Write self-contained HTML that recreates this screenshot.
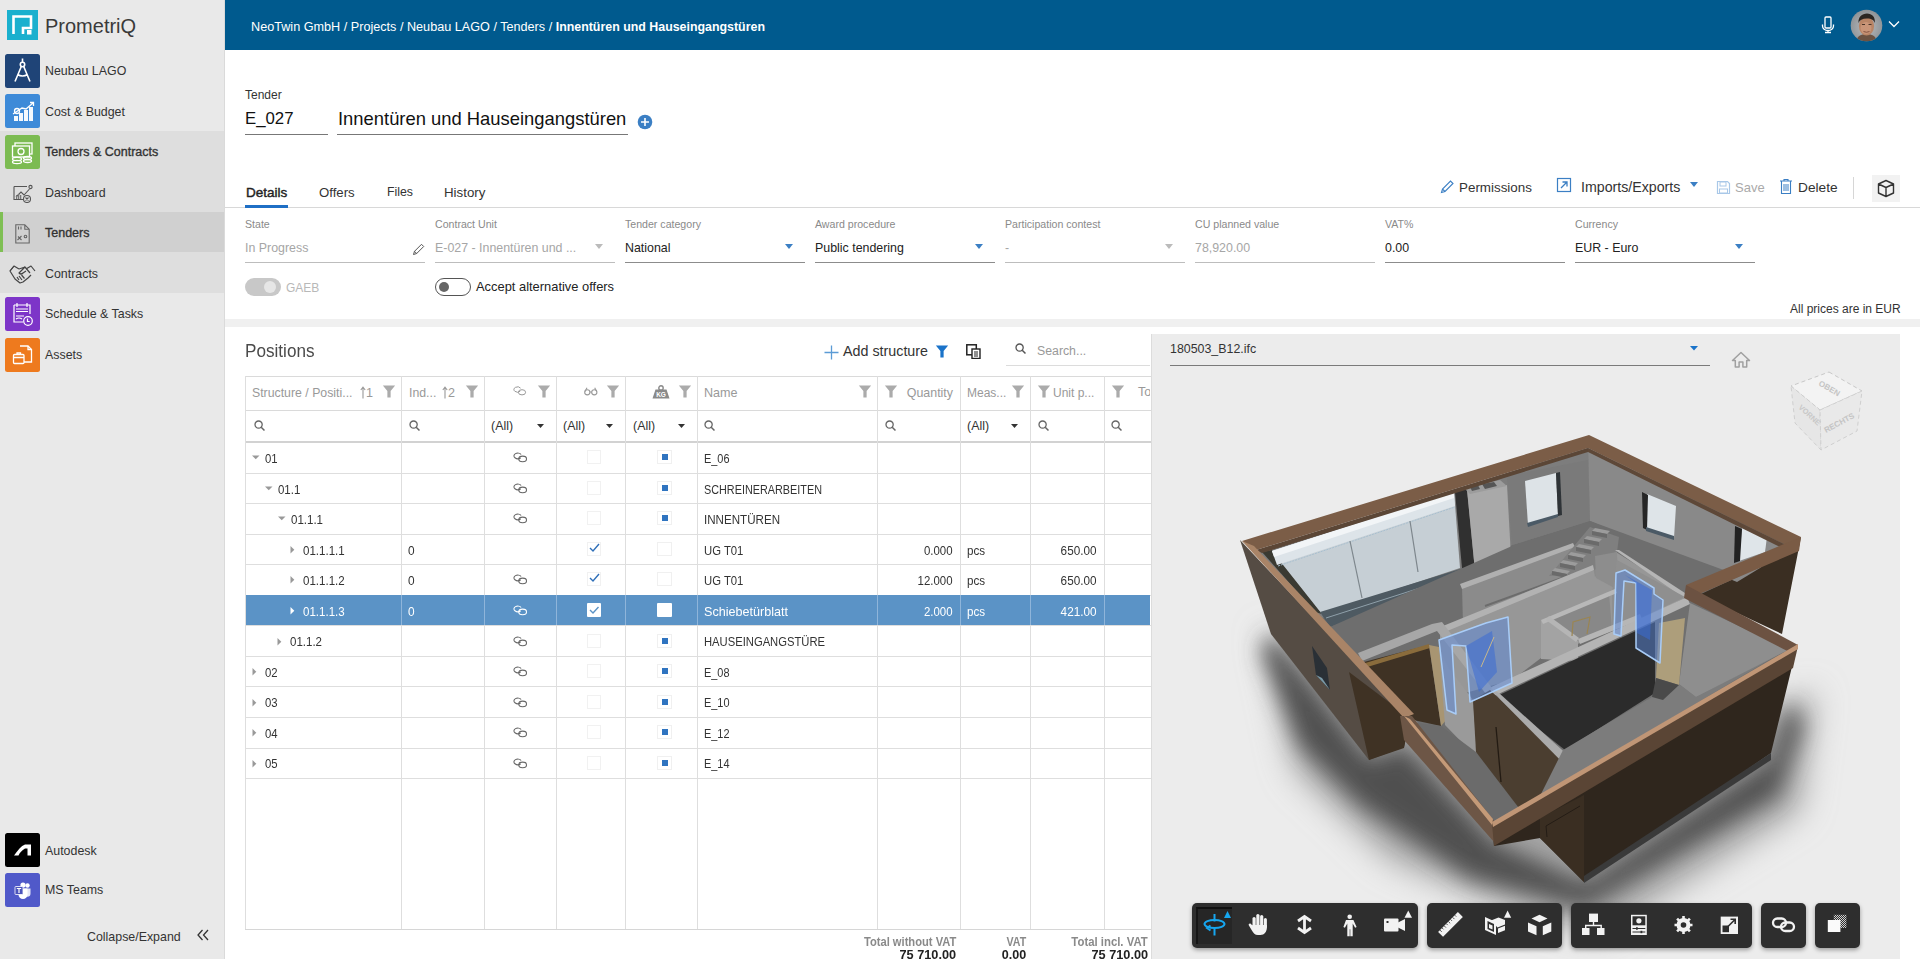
<!DOCTYPE html>
<html><head><meta charset="utf-8">
<style>
*{box-sizing:border-box;margin:0;padding:0}
html,body{width:1920px;height:959px;overflow:hidden;background:#fff;font-family:"Liberation Sans",sans-serif;color:#333}
.a{position:absolute}
.t{position:absolute;white-space:nowrap;line-height:1}
#side{position:absolute;left:0;top:0;width:225px;height:959px;background:#e9e9e9;border-right:1px solid #dadada}
.ico{position:absolute;left:5px;width:35px;height:34px;border-radius:2px}
.sl{position:absolute;left:45px;font-size:12.4px;color:#333;white-space:nowrap;line-height:1}
#hdr{position:absolute;left:225px;top:0;width:1695px;height:50px;background:#005a8e}
</style></head><body>
<div id="side">
  
  <div class="t" style="left:45px;top:16px;font-size:20px;color:#3a3a3a">PrometriQ</div>
  <div class="sl" style="top:65px">Neubau LAGO</div>
  <div class="sl" style="top:106px">Cost &amp; Budget</div>

  <div class="a" style="left:0;top:131px;width:224px;height:162px;background:#dedede"></div>
  <div class="sl" style="top:146px;font-size:12.5px;-webkit-text-stroke:0.35px #333">Tenders &amp; Contracts</div>
  <div class="sl" style="top:187px">Dashboard</div>
  <div class="a" style="left:0;top:212px;width:224px;height:40px;background:#d0d0d0"></div>
  <div class="a" style="left:0;top:212px;width:3px;height:40px;background:#7fbf54"></div>
  <div class="sl" style="top:227px;font-size:12.5px;-webkit-text-stroke:0.35px #333">Tenders</div>
  <div class="sl" style="top:268px">Contracts</div>
  <div class="sl" style="top:308px">Schedule &amp; Tasks</div>
  <div class="sl" style="top:349px">Assets</div>
  <div class="sl" style="top:845px">Autodesk</div>
  <div class="sl" style="top:884px">MS Teams</div>
  <div class="sl" style="left:87px;top:931px">Collapse/Expand</div>
</div>
<div id="hdr">
  <div class="t" style="left:26px;top:21px;font-size:12.65px;color:#fff">NeoTwin GmbH / Projects / Neubau LAGO / Tenders / <b style="font-size:12.4px">Innentüren und Hauseingangstüren</b></div>
</div>

<div id="main">
  <div class="t" style="left:245px;top:89px;font-size:12px;color:#333">Tender</div>
  <div class="t" style="left:245px;top:111px;font-size:16.8px;color:#111">E_027</div>
  <div class="a" style="left:245px;top:134px;width:83px;height:1px;background:#777"></div>
  <div class="t" style="left:338px;top:110px;font-size:18.4px;color:#111">Innentüren und Hauseingangstüren</div>
  <div class="a" style="left:337px;top:134px;width:291px;height:1px;background:#777"></div>
  <svg class="a" style="left:637px;top:114px" width="16" height="16" viewBox="0 0 16 16"><circle cx="8" cy="8" r="7.3" fill="#3b7fc4"/><path d="M8 4v8M4 8h8" stroke="#fff" stroke-width="1.6"/></svg>

  <!-- tabs -->
  <div class="t" style="left:246px;top:186px;font-size:13.5px;color:#222;-webkit-text-stroke:0.4px #222">Details</div>
  <div class="t" style="left:319px;top:186px;font-size:13.2px;color:#333">Offers</div>
  <div class="t" style="left:387px;top:186px;font-size:12.3px;color:#333">Files</div>
  <div class="t" style="left:444px;top:186px;font-size:13.3px;color:#333">History</div>
  <div class="a" style="left:225px;top:207px;width:1695px;height:1px;background:#d8d8d8"></div>
  <div class="a" style="left:245px;top:205px;width:43px;height:3px;background:#1f6fc5"></div>

  <!-- right toolbar -->
  <svg class="a" style="left:1439px;top:179px" width="16" height="16" viewBox="0 0 16 16"><path d="M2.5 13.5l1-3.5 8-8 2.5 2.5-8 8z M3.5 10l2.5 2.5" fill="none" stroke="#3b7fc4" stroke-width="1.1"/></svg>
  <div class="t" style="left:1459px;top:181px;font-size:13.4px;color:#333">Permissions</div>
  <svg class="a" style="left:1556px;top:176px" width="17" height="17" viewBox="0 0 17 17"><rect x="1.5" y="2.5" width="13" height="13" fill="none" stroke="#3b7fc4" stroke-width="1.2"/><path d="M5 12l6-6M6.5 6H11v4.5" fill="none" stroke="#3b7fc4" stroke-width="1.3"/></svg>
  <div class="t" style="left:1581px;top:180px;font-size:14.2px;color:#333">Imports/Exports</div>
  <svg class="a" style="left:1690px;top:182px" width="8" height="5" viewBox="0 0 8 5"><path d="M0 0h8L4 5z" fill="#3b7fc4"/></svg>
  <svg class="a" style="left:1716px;top:180px" width="15" height="15" viewBox="0 0 15 15"><path d="M1.5 1.5h10l2 2v10h-12z" fill="none" stroke="#a9c8e8" stroke-width="1.2"/><rect x="4" y="2" width="6" height="4" fill="none" stroke="#a9c8e8"/><rect x="3.5" y="9" width="8" height="4" fill="none" stroke="#a9c8e8"/></svg>
  <div class="t" style="left:1735px;top:181px;font-size:13px;color:#aaa">Save</div>
  <svg class="a" style="left:1779px;top:178px" width="14" height="17" viewBox="0 0 14 17"><path d="M1 3h12M5 3V1.5h4V3M2.5 3.5v12h9v-12" fill="none" stroke="#3b7fc4" stroke-width="1.1"/><path d="M5 6v7M7 6v7M9 6v7" stroke="#3b7fc4" stroke-width="1"/></svg>
  <div class="t" style="left:1798px;top:181px;font-size:13.7px;color:#333">Delete</div>
  <div class="a" style="left:1853px;top:177px;width:1px;height:22px;background:#d6d6d6"></div>
  <div class="a" style="left:1872px;top:175px;width:28px;height:27px;background:#f2f2f2"></div>
  <svg class="a" style="left:1876px;top:179px" width="20" height="19" viewBox="0 0 20 19"><path d="M10 1.5l7.5 3.5v9L10 17.5 2.5 14V5z M2.5 5L10 8.5 17.5 5 M10 8.5v9" fill="none" stroke="#333" stroke-width="1.4" stroke-linejoin="round"/></svg>

  <!-- fields -->
  <div class="t" style="left:245px;top:219px;font-size:10.6px;color:#8a8a8a">State</div>
  <div class="t" style="left:245px;top:242px;font-size:12.4px;color:#a6a6a6">In Progress</div>
  <div class="a" style="left:245px;top:262px;width:180px;height:1px;background:#bdbdbd"></div>
  <svg class="a" style="left:412px;top:242px" width="14" height="14" viewBox="0 0 14 14"><path d="M1.5 12.5l1-3.2 7-7 2.2 2.2-7 7z M2.5 9.3l2.2 2.2" fill="none" stroke="#555" stroke-width="1"/></svg>
  <div class="t" style="left:435px;top:219px;font-size:10.6px;color:#8a8a8a">Contract Unit</div>
  <div class="t" style="left:435px;top:242px;font-size:12.4px;color:#a6a6a6">E-027 - Innentüren und ...</div>
  <div class="a" style="left:435px;top:262px;width:180px;height:1px;background:#bdbdbd"></div>
  <svg class="a" style="left:595px;top:244px" width="8" height="5" viewBox="0 0 8 5"><path d="M0 0h8L4 5z" fill="#bbb"/></svg>
  <div class="t" style="left:625px;top:219px;font-size:10.6px;color:#8a8a8a">Tender category</div>
  <div class="t" style="left:625px;top:242px;font-size:12.4px;color:#222">National</div>
  <div class="a" style="left:625px;top:262px;width:180px;height:1px;background:#8c8c8c"></div>
  <svg class="a" style="left:785px;top:244px" width="8" height="5" viewBox="0 0 8 5"><path d="M0 0h8L4 5z" fill="#3b7fc4"/></svg>
  <div class="t" style="left:815px;top:219px;font-size:10.6px;color:#8a8a8a">Award procedure</div>
  <div class="t" style="left:815px;top:242px;font-size:12.4px;color:#222">Public tendering</div>
  <div class="a" style="left:815px;top:262px;width:180px;height:1px;background:#8c8c8c"></div>
  <svg class="a" style="left:975px;top:244px" width="8" height="5" viewBox="0 0 8 5"><path d="M0 0h8L4 5z" fill="#3b7fc4"/></svg>
  <div class="t" style="left:1005px;top:219px;font-size:10.6px;color:#8a8a8a">Participation contest</div>
  <div class="t" style="left:1005px;top:242px;font-size:12.4px;color:#a6a6a6">-</div>
  <div class="a" style="left:1005px;top:262px;width:180px;height:1px;background:#bdbdbd"></div>
  <svg class="a" style="left:1165px;top:244px" width="8" height="5" viewBox="0 0 8 5"><path d="M0 0h8L4 5z" fill="#bbb"/></svg>
  <div class="t" style="left:1195px;top:219px;font-size:10.6px;color:#8a8a8a">CU planned value</div>
  <div class="t" style="left:1195px;top:242px;font-size:12.4px;color:#a6a6a6">78,920.00</div>
  <div class="a" style="left:1195px;top:262px;width:180px;height:1px;background:#bdbdbd"></div>
  <div class="t" style="left:1385px;top:219px;font-size:10.6px;color:#8a8a8a">VAT%</div>
  <div class="t" style="left:1385px;top:242px;font-size:12.4px;color:#222">0.00</div>
  <div class="a" style="left:1385px;top:262px;width:180px;height:1px;background:#8c8c8c"></div>
  <div class="t" style="left:1575px;top:219px;font-size:10.6px;color:#8a8a8a">Currency</div>
  <div class="t" style="left:1575px;top:242px;font-size:12.4px;color:#222">EUR - Euro</div>
  <div class="a" style="left:1575px;top:262px;width:180px;height:1px;background:#8c8c8c"></div>
  <svg class="a" style="left:1735px;top:244px" width="8" height="5" viewBox="0 0 8 5"><path d="M0 0h8L4 5z" fill="#3b7fc4"/></svg>

  <!-- toggles -->
  <div class="a" style="left:245px;top:278px;width:36px;height:18px;border-radius:9px;background:#c8c8c8"></div>
  <div class="a" style="left:264px;top:281px;width:12px;height:12px;border-radius:6px;background:#e6e6e6"></div>
  <div class="t" style="left:286px;top:282px;font-size:12px;color:#b8b8b8">GAEB</div>
  <div class="a" style="left:435px;top:278px;width:36px;height:18px;border-radius:9px;border:1px solid #555;background:#fff"></div>
  <div class="a" style="left:439px;top:282px;width:10px;height:10px;border-radius:5px;background:#666"></div>
  <div class="t" style="left:476px;top:281px;font-size:12.9px;color:#222">Accept alternative offers</div>
  <div class="t" style="left:1790px;top:303px;font-size:12px;color:#333">All prices are in EUR</div>
  <div class="a" style="left:225px;top:319px;width:1695px;height:8px;background:#f0f0f0"></div>
</div>
<!--TABLE-->
<div class="t" style="left:245px;top:342px;font-size:18px;color:#4a4a4a;transform:scaleX(0.9516);transform-origin:0 0;">Positions</div>
<svg class="a" style="left:824px;top:345px" width="15" height="15" viewBox="0 0 15 15"><path d="M7.5 0.5v14M0.5 7.5h14" stroke="#5b9bd5" stroke-width="1.3"/></svg>
<div class="t" style="left:843px;top:344px;font-size:14.3px;color:#333;">Add structure</div>
<svg class="a" style="left:935px;top:345px" width="14" height="13" viewBox="0 0 13.5 13.2"><path d="M0.5 0.5h12.5l-4.6 5.6v6.6h-3.3v-6.6z" fill="#1a73c9"/></svg>
<svg class="a" style="left:966px;top:344px" width="15" height="15" viewBox="0 0 15 15"><rect x="0.8" y="0.8" width="9.5" height="10" fill="none" stroke="#222" stroke-width="1.5"/><rect x="6" y="5" width="8" height="9.5" fill="#fff" stroke="#222" stroke-width="1.4"/><path d="M8 8h4M8 10h4M8 12h4" stroke="#222" stroke-width="1"/></svg>
<svg class="a" style="left:1015px;top:343px" width="13" height="13" viewBox="0 0 13 13"><circle cx="4.6" cy="4.6" r="3.6" fill="none" stroke="#555" stroke-width="1.3"/><path d="M7.2 7.2l3.3 3.3" stroke="#555" stroke-width="1.5"/></svg>
<div class="t" style="left:1037px;top:345px;font-size:12.3px;color:#999;">Search...</div>
<div class="a" style="left:1006px;top:365px;width:144px;height:1px;background:#dcdcdc;"></div>
<div class="a" style="left:245px;top:376px;width:906px;height:1px;background:#dadada;"></div>
<div class="a" style="left:245px;top:410px;width:906px;height:1px;background:#dadada;"></div>
<div class="a" style="left:245px;top:441px;width:906px;height:2px;background:#d2d2d2;"></div>
<div class="a" style="left:245px;top:929px;width:906px;height:1px;background:#d6d6d6;"></div>
<div class="a" style="left:245px;top:376px;width:1px;height:553px;background:#dedede;"></div>
<div class="a" style="left:401px;top:376px;width:1px;height:553px;background:#dedede;"></div>
<div class="a" style="left:484px;top:376px;width:1px;height:553px;background:#dedede;"></div>
<div class="a" style="left:556px;top:376px;width:1px;height:553px;background:#dedede;"></div>
<div class="a" style="left:625px;top:376px;width:1px;height:553px;background:#dedede;"></div>
<div class="a" style="left:697px;top:376px;width:1px;height:553px;background:#dedede;"></div>
<div class="a" style="left:877px;top:376px;width:1px;height:553px;background:#dedede;"></div>
<div class="a" style="left:960px;top:376px;width:1px;height:553px;background:#dedede;"></div>
<div class="a" style="left:1030px;top:376px;width:1px;height:553px;background:#dedede;"></div>
<div class="a" style="left:1104px;top:376px;width:1px;height:553px;background:#dedede;"></div>
<div class="t" style="left:252px;top:387px;font-size:12.3px;color:#999;">Structure / Positi...</div>
<svg class="a" style="left:360px;top:386px" width="6" height="13" viewBox="0 0 6 13"><path d="M3 12.5V1.5M0.8 4L3 1.2 5.2 4" fill="none" stroke="#999" stroke-width="1.1"/></svg>
<div class="t" style="left:366px;top:387px;font-size:12.6px;color:#999;">1</div>
<svg class="a" style="left:382px;top:385px" width="14" height="13" viewBox="0 0 13.5 13.2"><path d="M0.5 0.5h12.5l-4.6 5.6v6.6h-3.3v-6.6z" fill="#ababab"/></svg>
<div class="t" style="left:409px;top:387px;font-size:12.3px;color:#999;">Ind...</div>
<svg class="a" style="left:442px;top:386px" width="6" height="13" viewBox="0 0 6 13"><path d="M3 12.5V1.5M0.8 4L3 1.2 5.2 4" fill="none" stroke="#999" stroke-width="1.1"/></svg>
<div class="t" style="left:448px;top:387px;font-size:12.6px;color:#999;">2</div>
<svg class="a" style="left:465px;top:385px" width="14" height="13" viewBox="0 0 13.5 13.2"><path d="M0.5 0.5h12.5l-4.6 5.6v6.6h-3.3v-6.6z" fill="#ababab"/></svg>
<svg class="a" style="left:513px;top:386px" width="14" height="10" viewBox="0 0 14 10"><g fill="none" stroke="#999" stroke-width="1"><path d="M7.2 5.2A3.6 2.6 0 1 1 7.6 2.2"/><ellipse cx="9" cy="6.3" rx="3.6" ry="2.6"/></g></svg>
<svg class="a" style="left:537px;top:385px" width="14" height="13" viewBox="0 0 13.5 13.2"><path d="M0.5 0.5h12.5l-4.6 5.6v6.6h-3.3v-6.6z" fill="#ababab"/></svg>
<svg class="a" style="left:584px;top:387px" width="14" height="9" viewBox="0 0 14 9"><g fill="none" stroke="#999" stroke-width="1.1"><circle cx="3.3" cy="5.3" r="2.6"/><circle cx="10.3" cy="5.3" r="2.6"/><path d="M5.9 5h1.8M1 4.5L3 0.8M12.7 4.5L10.7 0.8"/></g></svg>
<svg class="a" style="left:606px;top:385px" width="14" height="13" viewBox="0 0 13.5 13.2"><path d="M0.5 0.5h12.5l-4.6 5.6v6.6h-3.3v-6.6z" fill="#ababab"/></svg>
<svg class="a" style="left:652px;top:385px" width="18" height="14" viewBox="0 0 18 14"><path d="M3.5 4.5h11l3 9h-17z" fill="#8a8a8a"/><circle cx="9" cy="3" r="2.2" fill="none" stroke="#8a8a8a" stroke-width="1.4"/><text x="9" y="12" font-size="6.5" font-family="Liberation Sans" font-weight="bold" fill="#fff" text-anchor="middle">KG</text></svg>
<svg class="a" style="left:678px;top:385px" width="14" height="13" viewBox="0 0 13.5 13.2"><path d="M0.5 0.5h12.5l-4.6 5.6v6.6h-3.3v-6.6z" fill="#ababab"/></svg>
<div class="t" style="left:704px;top:387px;font-size:12.6px;color:#999;">Name</div>
<svg class="a" style="left:858px;top:385px" width="14" height="13" viewBox="0 0 13.5 13.2"><path d="M0.5 0.5h12.5l-4.6 5.6v6.6h-3.3v-6.6z" fill="#ababab"/></svg>
<svg class="a" style="left:884px;top:385px" width="14" height="13" viewBox="0 0 13.5 13.2"><path d="M0.5 0.5h12.5l-4.6 5.6v6.6h-3.3v-6.6z" fill="#ababab"/></svg>
<div class="t" style="right:967px;top:387px;font-size:12.4px;color:#999;">Quantity</div>
<div class="t" style="left:967px;top:387px;font-size:12.0px;color:#999;">Meas...</div>
<svg class="a" style="left:1011px;top:385px" width="14" height="13" viewBox="0 0 13.5 13.2"><path d="M0.5 0.5h12.5l-4.6 5.6v6.6h-3.3v-6.6z" fill="#ababab"/></svg>
<svg class="a" style="left:1037px;top:385px" width="14" height="13" viewBox="0 0 13.5 13.2"><path d="M0.5 0.5h12.5l-4.6 5.6v6.6h-3.3v-6.6z" fill="#ababab"/></svg>
<div class="t" style="left:1053px;top:387px;font-size:12.0px;color:#999;">Unit p...</div>
<svg class="a" style="left:1111px;top:385px" width="14" height="13" viewBox="0 0 13.5 13.2"><path d="M0.5 0.5h12.5l-4.6 5.6v6.6h-3.3v-6.6z" fill="#ababab"/></svg>
<div class="a" style="left:1104px;top:377px;width:46px;height:33px;overflow:hidden"><div class="t" style="left:34px;top:9px;font-size:12.6px;color:#999">Total</div></div>
<svg class="a" style="left:254px;top:420px" width="12" height="12" viewBox="0 0 12 12"><circle cx="4.6" cy="4.6" r="3.6" fill="none" stroke="#666" stroke-width="1.3"/><path d="M7.2 7.2l3.3 3.3" stroke="#666" stroke-width="1.5"/></svg>
<svg class="a" style="left:409px;top:420px" width="12" height="12" viewBox="0 0 12 12"><circle cx="4.6" cy="4.6" r="3.6" fill="none" stroke="#666" stroke-width="1.3"/><path d="M7.2 7.2l3.3 3.3" stroke="#666" stroke-width="1.5"/></svg>
<svg class="a" style="left:704px;top:420px" width="12" height="12" viewBox="0 0 12 12"><circle cx="4.6" cy="4.6" r="3.6" fill="none" stroke="#666" stroke-width="1.3"/><path d="M7.2 7.2l3.3 3.3" stroke="#666" stroke-width="1.5"/></svg>
<svg class="a" style="left:885px;top:420px" width="12" height="12" viewBox="0 0 12 12"><circle cx="4.6" cy="4.6" r="3.6" fill="none" stroke="#666" stroke-width="1.3"/><path d="M7.2 7.2l3.3 3.3" stroke="#666" stroke-width="1.5"/></svg>
<svg class="a" style="left:1038px;top:420px" width="12" height="12" viewBox="0 0 12 12"><circle cx="4.6" cy="4.6" r="3.6" fill="none" stroke="#666" stroke-width="1.3"/><path d="M7.2 7.2l3.3 3.3" stroke="#666" stroke-width="1.5"/></svg>
<svg class="a" style="left:1111px;top:420px" width="12" height="12" viewBox="0 0 12 12"><circle cx="4.6" cy="4.6" r="3.6" fill="none" stroke="#666" stroke-width="1.3"/><path d="M7.2 7.2l3.3 3.3" stroke="#666" stroke-width="1.5"/></svg>
<div class="t" style="left:491px;top:420px;font-size:12.4px;color:#333;">(All)</div>
<svg class="a" style="left:537px;top:424px" width="7" height="4" viewBox="0 0 7 3.8"><path d="M0 0h7L3.5 3.8z" fill="#333"/></svg>
<div class="t" style="left:563px;top:420px;font-size:12.4px;color:#333;">(All)</div>
<svg class="a" style="left:606px;top:424px" width="7" height="4" viewBox="0 0 7 3.8"><path d="M0 0h7L3.5 3.8z" fill="#333"/></svg>
<div class="t" style="left:633px;top:420px;font-size:12.4px;color:#333;">(All)</div>
<svg class="a" style="left:678px;top:424px" width="7" height="4" viewBox="0 0 7 3.8"><path d="M0 0h7L3.5 3.8z" fill="#333"/></svg>
<div class="t" style="left:967px;top:420px;font-size:12.4px;color:#333;">(All)</div>
<svg class="a" style="left:1011px;top:424px" width="7" height="4" viewBox="0 0 7 3.8"><path d="M0 0h7L3.5 3.8z" fill="#333"/></svg>
<div class="a" style="left:245px;top:473px;width:906px;height:1px;background:#dedede;"></div>
<svg class="a" style="left:252px;top:455px" width="8" height="5" viewBox="0 0 8 5"><path d="M0 0.5h7.5L3.75 4.3z" fill="#999"/></svg>
<div class="t" style="left:264.7px;top:453px;font-size:12.6px;color:#333;transform:scaleX(0.8995);transform-origin:0 0;">01</div>
<svg class="a" style="left:513px;top:452px" width="15" height="11" viewBox="0 0 14 10"><g fill="none" stroke="#666" stroke-width="1"><path d="M7.2 5.2A3.6 2.6 0 1 1 7.6 2.2"/><ellipse cx="9" cy="6.3" rx="3.6" ry="2.6"/></g></svg>
<div class="a" style="left:587px;top:450px;width:14px;height:14px;background:transparent;border:1px solid #f1f1f1"></div>
<div class="a" style="left:657px;top:450px;width:15px;height:14px;background:transparent;border:1px solid #f0f0f0"></div>
<div class="a" style="left:662px;top:454px;width:6px;height:6px;background:#2f74c0;"></div>
<div class="t" style="left:704px;top:453px;font-size:12.6px;color:#333;transform:scaleX(0.8670);transform-origin:0 0;">E_06</div>
<div class="a" style="left:245px;top:503px;width:906px;height:1px;background:#dedede;"></div>
<svg class="a" style="left:265px;top:486px" width="8" height="5" viewBox="0 0 8 5"><path d="M0 0.5h7.5L3.75 4.3z" fill="#999"/></svg>
<div class="t" style="left:277.7px;top:484px;font-size:12.6px;color:#333;transform:scaleX(0.9098);transform-origin:0 0;">01.1</div>
<svg class="a" style="left:513px;top:483px" width="15" height="11" viewBox="0 0 14 10"><g fill="none" stroke="#666" stroke-width="1"><path d="M7.2 5.2A3.6 2.6 0 1 1 7.6 2.2"/><ellipse cx="9" cy="6.3" rx="3.6" ry="2.6"/></g></svg>
<div class="a" style="left:587px;top:481px;width:14px;height:14px;background:transparent;border:1px solid #f1f1f1"></div>
<div class="a" style="left:657px;top:481px;width:15px;height:14px;background:transparent;border:1px solid #f0f0f0"></div>
<div class="a" style="left:662px;top:485px;width:6px;height:6px;background:#2f74c0;"></div>
<div class="t" style="left:704px;top:484px;font-size:12.6px;color:#333;transform:scaleX(0.8603);transform-origin:0 0;">SCHREINERARBEITEN</div>
<div class="a" style="left:245px;top:534px;width:906px;height:1px;background:#dedede;"></div>
<svg class="a" style="left:278px;top:516px" width="8" height="5" viewBox="0 0 8 5"><path d="M0 0.5h7.5L3.75 4.3z" fill="#999"/></svg>
<div class="t" style="left:290.7px;top:514px;font-size:12.6px;color:#333;transform:scaleX(0.9139);transform-origin:0 0;">01.1.1</div>
<svg class="a" style="left:513px;top:513px" width="15" height="11" viewBox="0 0 14 10"><g fill="none" stroke="#666" stroke-width="1"><path d="M7.2 5.2A3.6 2.6 0 1 1 7.6 2.2"/><ellipse cx="9" cy="6.3" rx="3.6" ry="2.6"/></g></svg>
<div class="a" style="left:587px;top:511px;width:14px;height:14px;background:transparent;border:1px solid #f1f1f1"></div>
<div class="a" style="left:657px;top:511px;width:15px;height:14px;background:transparent;border:1px solid #f0f0f0"></div>
<div class="a" style="left:662px;top:515px;width:6px;height:6px;background:#2f74c0;"></div>
<div class="t" style="left:704px;top:514px;font-size:12.6px;color:#333;transform:scaleX(0.9205);transform-origin:0 0;">INNENTÜREN</div>
<div class="a" style="left:245px;top:564px;width:906px;height:1px;background:#dedede;"></div>
<svg class="a" style="left:290px;top:546px" width="5" height="8" viewBox="0 0 5 8"><path d="M0.5 0v7.5L4.3 3.75z" fill="#999"/></svg>
<div class="t" style="left:302.8px;top:545px;font-size:12.6px;color:#333;transform:scaleX(0.9161);transform-origin:0 0;">01.1.1.1</div>
<div class="t" style="left:408px;top:545px;font-size:12.6px;color:#333;transform:scaleX(0.9423);transform-origin:0 0;">0</div>
<div class="a" style="left:587px;top:542px;width:14px;height:14px;background:transparent;border:1px solid #f1f1f1"></div>
<svg class="a" style="left:589px;top:543px" width="11" height="10" viewBox="0 0 11 10"><path d="M1 5l3 3 6-7" fill="none" stroke="#2f6fb8" stroke-width="1.4"/></svg>
<div class="a" style="left:657px;top:542px;width:15px;height:14px;background:transparent;border:1px solid #f0f0f0"></div>
<div class="t" style="left:704px;top:545px;font-size:12.6px;color:#333;transform:scaleX(0.8982);transform-origin:0 0;">UG T01</div>
<div class="t" style="right:967px;top:545px;font-size:12.6px;color:#333;transform:scaleX(0.9075);transform-origin:100% 0;">0.000</div>
<div class="t" style="left:967px;top:545px;font-size:12.6px;color:#333;transform:scaleX(0.9236);transform-origin:0 0;">pcs</div>
<div class="t" style="right:823px;top:545px;font-size:12.6px;color:#333;transform:scaleX(0.9320);transform-origin:100% 0;">650.00</div>
<div class="a" style="left:245px;top:595px;width:906px;height:1px;background:#dedede;"></div>
<svg class="a" style="left:290px;top:576px" width="5" height="8" viewBox="0 0 5 8"><path d="M0.5 0v7.5L4.3 3.75z" fill="#999"/></svg>
<div class="t" style="left:302.8px;top:575px;font-size:12.6px;color:#333;transform:scaleX(0.9161);transform-origin:0 0;">01.1.1.2</div>
<div class="t" style="left:408px;top:575px;font-size:12.6px;color:#333;transform:scaleX(0.9423);transform-origin:0 0;">0</div>
<svg class="a" style="left:513px;top:574px" width="15" height="11" viewBox="0 0 14 10"><g fill="none" stroke="#666" stroke-width="1"><path d="M7.2 5.2A3.6 2.6 0 1 1 7.6 2.2"/><ellipse cx="9" cy="6.3" rx="3.6" ry="2.6"/></g></svg>
<div class="a" style="left:587px;top:572px;width:14px;height:14px;background:transparent;border:1px solid #f1f1f1"></div>
<svg class="a" style="left:589px;top:573px" width="11" height="10" viewBox="0 0 11 10"><path d="M1 5l3 3 6-7" fill="none" stroke="#2f6fb8" stroke-width="1.4"/></svg>
<div class="a" style="left:657px;top:572px;width:15px;height:14px;background:transparent;border:1px solid #f0f0f0"></div>
<div class="t" style="left:704px;top:575px;font-size:12.6px;color:#333;transform:scaleX(0.8982);transform-origin:0 0;">UG T01</div>
<div class="t" style="right:967px;top:575px;font-size:12.6px;color:#333;transform:scaleX(0.9060);transform-origin:100% 0;">12.000</div>
<div class="t" style="left:967px;top:575px;font-size:12.6px;color:#333;transform:scaleX(0.9236);transform-origin:0 0;">pcs</div>
<div class="t" style="right:823px;top:575px;font-size:12.6px;color:#333;transform:scaleX(0.9320);transform-origin:100% 0;">650.00</div>
<div class="a" style="left:246px;top:595px;width:904px;height:30px;background:#5b93c6;"></div>
<div class="a" style="left:401px;top:595px;width:1px;height:30px;background:#8fb5da;"></div>
<div class="a" style="left:484px;top:595px;width:1px;height:30px;background:#8fb5da;"></div>
<div class="a" style="left:556px;top:595px;width:1px;height:30px;background:#8fb5da;"></div>
<div class="a" style="left:625px;top:595px;width:1px;height:30px;background:#8fb5da;"></div>
<div class="a" style="left:697px;top:595px;width:1px;height:30px;background:#8fb5da;"></div>
<div class="a" style="left:877px;top:595px;width:1px;height:30px;background:#8fb5da;"></div>
<div class="a" style="left:960px;top:595px;width:1px;height:30px;background:#8fb5da;"></div>
<div class="a" style="left:1030px;top:595px;width:1px;height:30px;background:#8fb5da;"></div>
<div class="a" style="left:1104px;top:595px;width:1px;height:30px;background:#8fb5da;"></div>
<div class="a" style="left:245px;top:625px;width:906px;height:1px;background:#dedede;"></div>
<svg class="a" style="left:290px;top:607px" width="5" height="8" viewBox="0 0 5 8"><path d="M0.5 0v7.5L4.3 3.75z" fill="#fff"/></svg>
<div class="t" style="left:302.8px;top:606px;font-size:12.6px;color:#fff;transform:scaleX(0.9161);transform-origin:0 0;">01.1.1.3</div>
<div class="t" style="left:408px;top:606px;font-size:12.6px;color:#fff;transform:scaleX(0.9423);transform-origin:0 0;">0</div>
<svg class="a" style="left:513px;top:605px" width="15" height="11" viewBox="0 0 14 10"><g fill="none" stroke="#fff" stroke-width="1"><path d="M7.2 5.2A3.6 2.6 0 1 1 7.6 2.2"/><ellipse cx="9" cy="6.3" rx="3.6" ry="2.6"/></g></svg>
<svg class="a" style="left:587px;top:603px" width="14" height="14" viewBox="0 0 14 14"><rect x="0" y="0" width="14" height="14" rx="1" fill="#fff"/><path d="M3 7l3 3 5.5-6" fill="none" stroke="#5b93c6" stroke-width="1.4"/></svg>
<div class="a" style="left:657px;top:603px;width:15px;height:14px;background:#fff;border-radius:1px"></div>
<div class="t" style="left:704px;top:606px;font-size:12.6px;color:#fff;transform:scaleX(0.9999);transform-origin:0 0;">Schiebetürblatt</div>
<div class="t" style="right:967px;top:606px;font-size:12.6px;color:#fff;transform:scaleX(0.9075);transform-origin:100% 0;">2.000</div>
<div class="t" style="left:967px;top:606px;font-size:12.6px;color:#fff;transform:scaleX(0.9236);transform-origin:0 0;">pcs</div>
<div class="t" style="right:823px;top:606px;font-size:12.6px;color:#fff;transform:scaleX(0.9320);transform-origin:100% 0;">421.00</div>
<div class="a" style="left:245px;top:656px;width:906px;height:1px;background:#dedede;"></div>
<svg class="a" style="left:277px;top:638px" width="5" height="8" viewBox="0 0 5 8"><path d="M0.5 0v7.5L4.3 3.75z" fill="#999"/></svg>
<div class="t" style="left:289.8px;top:636px;font-size:12.6px;color:#333;transform:scaleX(0.9139);transform-origin:0 0;">01.1.2</div>
<svg class="a" style="left:513px;top:636px" width="15" height="11" viewBox="0 0 14 10"><g fill="none" stroke="#666" stroke-width="1"><path d="M7.2 5.2A3.6 2.6 0 1 1 7.6 2.2"/><ellipse cx="9" cy="6.3" rx="3.6" ry="2.6"/></g></svg>
<div class="a" style="left:587px;top:634px;width:14px;height:14px;background:transparent;border:1px solid #f1f1f1"></div>
<div class="a" style="left:657px;top:634px;width:15px;height:14px;background:transparent;border:1px solid #f0f0f0"></div>
<div class="a" style="left:662px;top:638px;width:6px;height:6px;background:#2f74c0;"></div>
<div class="t" style="left:704px;top:636px;font-size:12.6px;color:#333;transform:scaleX(0.8913);transform-origin:0 0;">HAUSEINGANGSTÜRE</div>
<div class="a" style="left:245px;top:686px;width:906px;height:1px;background:#dedede;"></div>
<svg class="a" style="left:252px;top:668px" width="5" height="8" viewBox="0 0 5 8"><path d="M0.5 0v7.5L4.3 3.75z" fill="#999"/></svg>
<div class="t" style="left:264.8px;top:667px;font-size:12.6px;color:#333;transform:scaleX(0.8995);transform-origin:0 0;">02</div>
<svg class="a" style="left:513px;top:666px" width="15" height="11" viewBox="0 0 14 10"><g fill="none" stroke="#666" stroke-width="1"><path d="M7.2 5.2A3.6 2.6 0 1 1 7.6 2.2"/><ellipse cx="9" cy="6.3" rx="3.6" ry="2.6"/></g></svg>
<div class="a" style="left:587px;top:664px;width:14px;height:14px;background:transparent;border:1px solid #f1f1f1"></div>
<div class="a" style="left:657px;top:664px;width:15px;height:14px;background:transparent;border:1px solid #f0f0f0"></div>
<div class="a" style="left:662px;top:668px;width:6px;height:6px;background:#2f74c0;"></div>
<div class="t" style="left:704px;top:667px;font-size:12.6px;color:#333;transform:scaleX(0.8670);transform-origin:0 0;">E_08</div>
<div class="a" style="left:245px;top:717px;width:906px;height:1px;background:#dedede;"></div>
<svg class="a" style="left:252px;top:699px" width="5" height="8" viewBox="0 0 5 8"><path d="M0.5 0v7.5L4.3 3.75z" fill="#999"/></svg>
<div class="t" style="left:264.8px;top:697px;font-size:12.6px;color:#333;transform:scaleX(0.8995);transform-origin:0 0;">03</div>
<svg class="a" style="left:513px;top:697px" width="15" height="11" viewBox="0 0 14 10"><g fill="none" stroke="#666" stroke-width="1"><path d="M7.2 5.2A3.6 2.6 0 1 1 7.6 2.2"/><ellipse cx="9" cy="6.3" rx="3.6" ry="2.6"/></g></svg>
<div class="a" style="left:587px;top:695px;width:14px;height:14px;background:transparent;border:1px solid #f1f1f1"></div>
<div class="a" style="left:657px;top:695px;width:15px;height:14px;background:transparent;border:1px solid #f0f0f0"></div>
<div class="a" style="left:662px;top:699px;width:6px;height:6px;background:#2f74c0;"></div>
<div class="t" style="left:704px;top:697px;font-size:12.6px;color:#333;transform:scaleX(0.8670);transform-origin:0 0;">E_10</div>
<div class="a" style="left:245px;top:748px;width:906px;height:1px;background:#dedede;"></div>
<svg class="a" style="left:252px;top:729px" width="5" height="8" viewBox="0 0 5 8"><path d="M0.5 0v7.5L4.3 3.75z" fill="#999"/></svg>
<div class="t" style="left:264.8px;top:728px;font-size:12.6px;color:#333;transform:scaleX(0.8995);transform-origin:0 0;">04</div>
<svg class="a" style="left:513px;top:727px" width="15" height="11" viewBox="0 0 14 10"><g fill="none" stroke="#666" stroke-width="1"><path d="M7.2 5.2A3.6 2.6 0 1 1 7.6 2.2"/><ellipse cx="9" cy="6.3" rx="3.6" ry="2.6"/></g></svg>
<div class="a" style="left:587px;top:725px;width:14px;height:14px;background:transparent;border:1px solid #f1f1f1"></div>
<div class="a" style="left:657px;top:725px;width:15px;height:14px;background:transparent;border:1px solid #f0f0f0"></div>
<div class="a" style="left:662px;top:729px;width:6px;height:6px;background:#2f74c0;"></div>
<div class="t" style="left:704px;top:728px;font-size:12.6px;color:#333;transform:scaleX(0.8670);transform-origin:0 0;">E_12</div>
<div class="a" style="left:245px;top:778px;width:906px;height:1px;background:#dedede;"></div>
<svg class="a" style="left:252px;top:760px" width="5" height="8" viewBox="0 0 5 8"><path d="M0.5 0v7.5L4.3 3.75z" fill="#999"/></svg>
<div class="t" style="left:264.8px;top:758px;font-size:12.6px;color:#333;transform:scaleX(0.8995);transform-origin:0 0;">05</div>
<svg class="a" style="left:513px;top:758px" width="15" height="11" viewBox="0 0 14 10"><g fill="none" stroke="#666" stroke-width="1"><path d="M7.2 5.2A3.6 2.6 0 1 1 7.6 2.2"/><ellipse cx="9" cy="6.3" rx="3.6" ry="2.6"/></g></svg>
<div class="a" style="left:587px;top:756px;width:14px;height:14px;background:transparent;border:1px solid #f1f1f1"></div>
<div class="a" style="left:657px;top:756px;width:15px;height:14px;background:transparent;border:1px solid #f0f0f0"></div>
<div class="a" style="left:662px;top:760px;width:6px;height:6px;background:#2f74c0;"></div>
<div class="t" style="left:704px;top:758px;font-size:12.6px;color:#333;transform:scaleX(0.8670);transform-origin:0 0;">E_14</div>
<div class="t" style="right:964px;top:936px;font-size:12px;color:#8a8a8a;font-weight:bold;transform:scaleX(0.9304);transform-origin:100% 0;">Total without VAT</div>
<div class="t" style="right:964px;top:949px;font-size:12.4px;color:#222;font-weight:bold;transform:scaleX(1.0268);transform-origin:100% 0;">75 710.00</div>
<div class="t" style="right:894px;top:936px;font-size:12px;color:#8a8a8a;font-weight:bold;transform:scaleX(0.8866);transform-origin:100% 0;">VAT</div>
<div class="t" style="right:894px;top:949px;font-size:12.4px;color:#222;font-weight:bold;transform:scaleX(1.0118);transform-origin:100% 0;">0.00</div>
<div class="t" style="right:772px;top:936px;font-size:12px;color:#8a8a8a;font-weight:bold;transform:scaleX(0.9459);transform-origin:100% 0;">Total incl. VAT</div>
<div class="t" style="right:772px;top:949px;font-size:12.4px;color:#222;font-weight:bold;transform:scaleX(1.0268);transform-origin:100% 0;">75 710.00</div>
<!--/TABLE-->
<!--VIEWER-->
<div class="a" style="left:1151px;top:334px;width:749px;height:625px;background:#ececec;border-left:1px solid #dcdcdc"></div>
<div class="t" style="left:1170px;top:343px;font-size:12.4px;color:#333;">180503_B12.ifc</div>
<div class="a" style="left:1170px;top:365px;width:540px;height:1px;background:#7a7a7a;"></div>
<svg class="a" style="left:1690px;top:346px" width="8" height="5" viewBox="0 0 8 5"><path d="M0 0h8L4 4.5z" fill="#1a73c9"/></svg>
<svg class="a" style="left:1731px;top:351px" width="20" height="18" viewBox="0 0 20 18"><path d="M1.5 9.5L10 1.5l8.5 8h-2.8v6.5h-3.8v-5h-3.8v5H4.3V9.5z" fill="none" stroke="#a0a0a0" stroke-width="1.5" stroke-linejoin="round"/></svg>
<svg class="a" style="left:1151px;top:334px" width="749" height="625" viewBox="1151 334 749 625"><defs><linearGradient id="glass" x1="0" y1="0" x2="0.12" y2="1"><stop offset="0" stop-color="#f4f7f9"/><stop offset="0.22" stop-color="#dfe6ea"/><stop offset="0.3" stop-color="#c9d1d7"/><stop offset="1" stop-color="#c3ccd2"/></linearGradient><filter id="blur1" x="-30%" y="-30%" width="160%" height="160%"><feGaussianBlur stdDeviation="11"/></filter><filter id="blur2" x="-30%" y="-30%" width="160%" height="160%"><feGaussianBlur stdDeviation="16"/></filter></defs><polygon points="1829,372 1862,391 1820,410 1791,386" fill="#f3f3f3" stroke="#c8c8c8" stroke-width="1" stroke-dasharray="4 3"/><polygon points="1791,386 1820,410 1821,450 1795,423" fill="#e6e6e6" stroke="#cfcfcf" stroke-width="1" stroke-dasharray="4 3"/><polygon points="1820,410 1862,391 1857,431 1821,450" fill="#e9e9e9" stroke="#cfcfcf" stroke-width="1" stroke-dasharray="4 3"/><text x="0" y="0" font-family="Liberation Sans" font-size="8" font-weight="bold" fill="#c4c4c4" transform="translate(1818,385) rotate(30)">OBEN</text><text x="0" y="0" font-family="Liberation Sans" font-size="7.5" font-weight="bold" fill="#c8c8c8" transform="translate(1798,408) rotate(42)">VORNE</text><text x="0" y="0" font-family="Liberation Sans" font-size="8" font-weight="bold" fill="#c4c4c4" transform="translate(1826,433) rotate(-28)">RECHTS</text><g filter="url(#blur2)"><polygon points="1265,630 1295,770 1390,860 1500,905 1600,935 1800,810 1815,690 1600,800 1400,720" fill="#a4a4a4" /></g><g filter="url(#blur1)"><polygon points="1271,634 1369,760 1404,745 1494,842 1585,883 1771,760 1790,700 1802,725 1778,795 1585,908 1470,878 1360,805 1300,745 1262,650" fill="#4f4f4f" /></g><polygon points="1240,540 1410,720 1404,747 1369,760 1271,634" fill="#554c44" /><polygon points="1312,646 1327,668 1330,690 1316,675" fill="#2a3036" /><polygon points="1322,678 1330,690 1316,675" fill="#7b9aa8" /><polygon points="1349,672 1410,718 1404,748 1369,760" fill="#3f3224" /><polygon points="1492,824 1797,646 1771,753 1584,882 1540,838 1494,846" fill="#2f261d" /><polygon points="1540,818 1584,795 1584,882 1540,838" fill="#3a2e22" /><line x1="1546" y1="826" x2="1580" y2="806" stroke="#241c15" stroke-width="1" /><line x1="1546" y1="826" x2="1547" y2="837" stroke="#241c15" stroke-width="1" /><polygon points="1584,876 1771,753 1771,760 1584,883" fill="#3a3a3a" /><polygon points="1686,590 1801,537 1782,634 1735,612" fill="#3a2e22" /><polygon points="1256,551 1588,448 1788,545 1688,592 1795,650 1493,825 1410,713" fill="#6f6f6f" /><polygon points="1256,551 1588,448 1590,521 1512,545 1470,572 1322,618" fill="#7d7d7d" /><polygon points="1262,552 1272,550 1322,614 1315,612" fill="#3a3a32" /><polygon points="1272,551 1454,492 1460,568 1322,614" fill="#c6cfd5" /><polygon points="1272,551 1454,492 1455,506 1277,565" fill="#dde4e9" /><polygon points="1272,551 1454,492 1454,498 1274,557" fill="#f2f5f7" /><line x1="1278" y1="566" x2="1455" y2="507" stroke="#a9c0d0" stroke-width="1" stroke-dasharray="2 1"/><line x1="1350" y1="541" x2="1362" y2="598" stroke="#7d868c" stroke-width="1.2" /><line x1="1410" y1="521" x2="1418" y2="572" stroke="#7d868c" stroke-width="1.2" /><polygon points="1320,612 1470,566 1473,576 1330,627" fill="#4e5a62" /><line x1="1326" y1="618" x2="1470" y2="572" stroke="#8fa0aa" stroke-width="1" /><polygon points="1455,492 1467,489 1475,571 1462,568" fill="#303030" /><polygon points="1467,490 1507,485 1511,557 1475,571" fill="#a9a9a9" /><polygon points="1464,488 1500,480 1507,486 1470,494" fill="#9c9c9c" /><polygon points="1470,487 1478,485 1480,489 1472,491" fill="#555" /><polygon points="1482,484 1494,482 1497,486 1485,489" fill="#555" /><polygon points="1507,476 1588,460 1590,521 1512,545" fill="#7a7a7a" /><polygon points="1525,481 1556,473 1558,516 1528,525" fill="#dde3e7" /><polygon points="1556,473 1560,472 1562,515 1558,516" fill="#2e3337" /><polygon points="1527,523 1558,514 1558,517 1528,527" fill="#4b5a66" /><polygon points="1588,448 1786,545 1760,568 1737,582 1590,521" fill="#898989" /><polygon points="1647,494 1676,506 1674,538 1646,529" fill="#dee4e8" /><polygon points="1642,492 1648,495 1647,530 1643,528" fill="#262626" /><polygon points="1646,527 1674,536 1674,540 1646,531" fill="#4b5a66" /><polygon points="1742,528 1767,537 1765,552 1739,561" fill="#dfe5e9" /><polygon points="1735,526 1742,529 1740,561 1734,563" fill="#222" /><polygon points="1330,627 1512,546 1590,521 1740,576 1688,600 1440,690 1400,700" fill="#6e6e6e" /><polygon points="1462,586 1573,545 1596,560 1596,600 1463,625" fill="#8b8b8b" /><polygon points="1460,584 1573,543 1575,547 1462,589" fill="#b0b0b0" /><line x1="1485" y1="606" x2="1592" y2="567" stroke="#6c6c6c" stroke-width="2" /><polygon points="1549,576 1590,527 1619,537 1617,552 1592,572" fill="#7f7f7f" /><polygon points="1552,571 1567,574 1570,571 1555,568" fill="#9c9c9c" /><polygon points="1552,571 1567,574 1567,578 1552,575" fill="#6a6a6a" /><polygon points="1560,563 1575,566 1578,563 1563,560" fill="#9c9c9c" /><polygon points="1560,563 1575,566 1575,570 1560,567" fill="#6a6a6a" /><polygon points="1568,555 1583,558 1586,555 1571,552" fill="#9c9c9c" /><polygon points="1568,555 1583,558 1583,562 1568,559" fill="#6a6a6a" /><polygon points="1576,547 1591,550 1594,547 1579,544" fill="#9c9c9c" /><polygon points="1576,547 1591,550 1591,554 1576,551" fill="#6a6a6a" /><polygon points="1584,539 1599,542 1602,539 1587,536" fill="#9c9c9c" /><polygon points="1584,539 1599,542 1599,546 1584,543" fill="#6a6a6a" /><polygon points="1592,531 1607,534 1610,531 1595,528" fill="#9c9c9c" /><polygon points="1592,531 1607,534 1607,538 1592,535" fill="#6a6a6a" /><polygon points="1440,630 1593,567 1595,577 1616,552 1687,597 1640,620 1541,658 1512,680 1440,700" fill="#979797" /><polygon points="1438,628 1593,565 1594,570 1440,634" fill="#b2b2b2" /><polygon points="1595,556 1617,552 1618,590 1596,578" fill="#8d8d8d" /><polygon points="1615,550 1619,550 1688,595 1684,598" fill="#b5b5b5" /><polygon points="1612,592 1617,560 1685,597 1640,618 1612,630" fill="#8f8f8f" /><polygon points="1541,621 1549,618 1578,640 1578,661 1541,659" fill="#a3a3a3" /><polygon points="1549,618 1609,593 1612,630 1578,641" fill="#888" /><polygon points="1541,620 1615,589 1617,593 1543,624" fill="#b8b8b8" /><polygon points="1549,616 1579,638 1576,642 1546,620" fill="#b5b5b5" /><polygon points="1578,639 1640,614 1642,619 1580,644" fill="#b6b6b6" /><polyline points="1572,636 1573,622 1590,617 1587,634" fill="none" stroke="#9a8552" stroke-width="1.2"/><polygon points="1497,696 1655,622 1655,693 1565,750" fill="#2b2b2b" /><polygon points="1487,689 1687,597 1690,604 1492,697" fill="#b4b4b4" /><polygon points="1360,663 1429,645 1441,726 1404,718" fill="#3f3224" /><polygon points="1362,664 1429,644 1430,648 1364,668" fill="#8a6c3c" /><polygon points="1429,645 1439,647 1448,718 1441,726" fill="#a89572" /><polygon points="1439,647 1448,667 1473,700 1478,759 1445,725" fill="#9a9a9a" /><polygon points="1409,722 1441,726 1476,752 1522,810 1492,822" fill="#6b6b6b" /><polygon points="1358,653 1432,624 1442,622 1492,688 1486,694 1437,631 1362,661" fill="#a7a7a7" /><polygon points="1473,700 1490,690 1577,772 1576,782 1522,812 1476,752" fill="#4b3e30" /><line x1="1496" y1="727" x2="1501" y2="782" stroke="#231b13" stroke-width="1.3" /><polygon points="1489,688 1499,693 1582,768 1575,775" fill="#ababab" /><polygon points="1563,750 1652,697 1679,684 1696,697 1784,651 1540,796" fill="#7c7c7c" /><polygon points="1690,603 1790,650 1784,652 1696,697 1679,684" fill="#8e8e8e" /><polygon points="1659,623 1685,618 1679,685 1656,678" fill="#ad9e7b" /><polygon points="1652,697 1656,678 1679,685 1663,700" fill="#4a4a4a" /><polygon points="1242,541 1589,435 1801,537 1788,546 1588,448 1256,550" fill="#7b5d47" /><polygon points="1256,550 1588,448 1588,452 1262,553" fill="#5b4636" /><polygon points="1588,448 1788,546 1784,549 1588,452" fill="#5e4838" /><polygon points="1242,541 1254,546 1414,714 1404,718" fill="#a98467" /><polygon points="1801,537 1799,551 1690,598 1686,585" fill="#7a5b45" /><polygon points="1686,585 1798,645 1795,655 1684,598" fill="#6c5242" /><polygon points="1400,716 1412,716 1495,822 1494,842 1404,740" fill="#6d5646" /><polygon points="1404,716 1410,719 1493,819 1492,825" fill="#c49a78" /><polygon points="1492,824 1798,646 1793,668 1494,846" fill="#5a4535" /><polygon points="1492,822 1798,644 1798,649 1493,827" fill="#c09676" /><polygon points="1439,640 1450,636 1486,623 1508,617 1512,683 1470,702 1466,646 1452,645 1456,714 1447,710" fill="#5a88dc" fill-opacity="0.5" stroke="#a9cdf8" stroke-width="1.5" stroke-linejoin="round"/><polygon points="1466,646 1492,631 1497,672 1479,692" fill="#3b6bd3" fill-opacity="0.55"/><line x1="1494" y1="637" x2="1481" y2="667" stroke="#c9b88a" stroke-width="1" /><polygon points="1616,573 1625,570 1654,588 1654,594 1663,600 1660,663 1636,648 1636,583 1624,581 1621,636 1614,634" fill="#5a88dc" fill-opacity="0.5" stroke="#a9cdf8" stroke-width="1.5" stroke-linejoin="round"/><polygon points="1625,575 1652,590 1650,640 1637,633 1636,583" fill="#3b6bd3" fill-opacity="0.55"/></svg>
<div class="a" style="left:1192px;top:903px;width:226px;height:45px;background:#2e2e2e;border-radius:5px;box-shadow:0 2px 4px rgba(0,0,0,.35)"></div>
<div class="a" style="left:1427px;top:903px;width:135px;height:45px;background:#2e2e2e;border-radius:5px;box-shadow:0 2px 4px rgba(0,0,0,.35)"></div>
<div class="a" style="left:1571px;top:903px;width:181px;height:45px;background:#2e2e2e;border-radius:5px;box-shadow:0 2px 4px rgba(0,0,0,.35)"></div>
<div class="a" style="left:1761px;top:903px;width:45px;height:45px;background:#2e2e2e;border-radius:5px;box-shadow:0 2px 4px rgba(0,0,0,.35)"></div>
<div class="a" style="left:1815px;top:903px;width:45px;height:45px;background:#2e2e2e;border-radius:5px;box-shadow:0 2px 4px rgba(0,0,0,.35)"></div>
<div class="a" style="left:1196px;top:907px;width:36px;height:37px;background:#262626;border-top:2px solid #111;border-left:2px solid #151515"></div>
<svg class="a" style="left:1180px;top:898px" width="700" height="60" viewBox="1180 898 700 60"><g fill="none" stroke="#16a6ef" stroke-width="2"><ellipse cx="1214.5" cy="924" rx="10" ry="4"/><path d="M1214.5 914v7.5M1214.5 928.5v7"/><path d="M1210.5 925.5l-3.5 2.5 3.5 2.5"/></g><path d="M1224 918h7l-3.5-7z" fill="#16a6ef"/><g fill="#f2f2f2"><rect x="1252.5" y="917" width="3.2" height="11" rx="1.6"/><rect x="1256.3" y="914" width="3.2" height="13" rx="1.6"/><rect x="1260.1" y="915" width="3.2" height="12" rx="1.6"/><rect x="1263.9" y="918" width="3" height="10" rx="1.5"/><path d="M1252.5 925h14.4v2.5c0 4-2.5 7.5-6.5 7.5h-2.5c-3 0-4.5-2-6-4.5l-3-5c-.8-1.3.8-2.6 2-1.5l1.6 1.5z"/></g><g fill="none" stroke="#f2f2f2" stroke-width="2.8" stroke-linejoin="miter"><path d="M1298 921l6.5-4.5 6.5 4.5M1298 928l6.5 4.5 6.5-4.5M1304.5 917v15"/></g><g fill="#f2f2f2"><circle cx="1349.7" cy="916.8" r="2.3"/><path d="M1346 920h7.4l3.2 7-1.5.7-2.4-4.3v12.9h-2.4v-7h-.6v7h-2.4V923.4l-2.4 4.3-1.5-.7z"/></g><g fill="#f2f2f2"><rect x="1384" y="918.5" width="14.5" height="13" rx="1"/><path d="M1398 922.5l7-3.5v12l-7-3.5z"/><path d="M1404.5 917.8h7.5l-3.75-7.2z"/></g><rect x="1386.5" y="921" width="2" height="2" fill="#2e2e2e"/><g transform="rotate(-45 1450.4 924.4)"><rect x="1436.4" y="921" width="28" height="7" fill="#f2f2f2"/><path d="M1439 921v2.5M1442 921v2M1445 921v2.5M1448 921v2M1451 921v2.5M1454 921v2M1457 921v2.5M1460 921v2" stroke="#2e2e2e" stroke-width="0.8"/></g><g fill="#f2f2f2"><path d="M1491 920.5l7.5-3 6.5 2.5v4.5l-7.5 3z"/><path d="M1498 928.5l7-2.8v4.5l-7 2.8z"/><path d="M1485 917l11 5v13l-11-5z"/><path d="M1504 917.8h7.2l-3.6-7.2z"/></g><path d="M1487.5 921l6.5 3v8l-6.5-3z" fill="#2e2e2e"/><path d="M1489 924l3.5 1.6v4l-3.5-1.6z" fill="#f2f2f2"/><g fill="#f2f2f2"><path d="M1539.5 914.8l8 3.7-8 3.7-8-3.7z"/><path d="M1528 922.5l8.5 3.8v9l-8.5-3.8z"/><path d="M1551.3 922.5l-8.5 3.8v9l8.5-3.8z"/></g><g fill="#f2f2f2"><rect x="1589" y="913.6" width="9" height="8.4"/><rect x="1582" y="928" width="7.5" height="7"/><rect x="1597" y="928" width="7.5" height="7"/></g><path d="M1593.5 922v3.5M1585.7 928v-2.5h15.5v2.5" fill="none" stroke="#f2f2f2" stroke-width="1.4"/><rect x="1631" y="914.8" width="15.8" height="20.2" fill="#f2f2f2"/><rect x="1632.5" y="916.3" width="12.8" height="9" fill="#2e2e2e"/><circle cx="1638.9" cy="920.8" r="2.6" fill="#f2f2f2"/><path d="M1632.5 928.5h12.8M1632.5 932h12.8" stroke="#2e2e2e" stroke-width="1.1"/><rect x="1636" y="927.3" width="1.8" height="2.4" fill="#2e2e2e"/><rect x="1640.5" y="930.8" width="1.8" height="2.4" fill="#2e2e2e"/><g fill="#f2f2f2"><circle cx="1683.5" cy="925" r="7"/><g stroke="#f2f2f2" stroke-width="2.6"><path d="M1683.5 916v18M1674.5 925h18M1677.1 918.6l12.8 12.8M1689.9 918.6l-12.8 12.8"/></g></g><circle cx="1683.5" cy="925" r="2.8" fill="#2e2e2e"/><rect x="1720.7" y="916.6" width="17.3" height="17.4" fill="#f2f2f2"/><rect x="1722.5" y="925.5" width="6.5" height="6.7" fill="#2e2e2e"/><path d="M1727 927.5l8-8M1730.5 919.3h4.7v4.7" fill="none" stroke="#2e2e2e" stroke-width="1.6"/><g fill="none" stroke="#f2f2f2" stroke-width="2.3"><rect x="1773" y="918.5" width="13" height="8.5" rx="4.25"/><rect x="1781" y="922.5" width="13" height="8.5" rx="4.25"/></g><defs><pattern id="hat" width="2" height="2" patternUnits="userSpaceOnUse"><rect width="2" height="2" fill="#2e2e2e"/><rect width="1" height="1" fill="#cfcfcf"/><rect x="1" y="1" width="1" height="1" fill="#cfcfcf"/></pattern></defs><rect x="1833.8" y="914.8" width="12.6" height="13.2" fill="url(#hat)"/><rect x="1827.8" y="920" width="12.6" height="12" fill="#fafafa"/></svg>
<!--/VIEWER-->
<!--SIDE-->
<svg class="a" style="left:7px;top:10px" width="31" height="30" viewBox="0 0 31 30"><rect width="31" height="30" fill="#1ab0ce"/><path d="M6.5 24V6.5h17.5v11.5h-8v6" fill="none" stroke="#fff" stroke-width="2.6"/><rect x="20" y="20" width="4.5" height="4.5" fill="#fff"/></svg>
<svg class="a" style="left:5px;top:54px" width="35" height="34" viewBox="0 0 35 34"><rect width="35" height="34" rx="2.5" fill="#1f4477"/><g stroke="#fff" fill="none" stroke-width="1.6"><circle cx="17.5" cy="10.5" r="2.2"/><path d="M16.3 12.5L10 27.5M18.7 12.5L25 27.5M12.5 20.5q5 3 10 0M17.5 4.5v4"/></g></svg>
<svg class="a" style="left:5px;top:94px" width="35" height="34" viewBox="0 0 35 34"><rect width="35" height="34" rx="2.5" fill="#3d8ad8"/><g fill="#fff" opacity="0.95"><rect x="9" y="22" width="4" height="5"/><rect x="14" y="19" width="4" height="8"/><rect x="19" y="16" width="4" height="11"/><rect x="24" y="13" width="4" height="14"/></g><g stroke="#fff" fill="none" stroke-width="1.3"><path d="M8 20l9-6 4 1 7-6M25 8.5h3.5V12"/><circle cx="12" cy="17" r="2.5"/></g></svg>
<svg class="a" style="left:5px;top:135px" width="35" height="34" viewBox="0 0 35 34"><rect width="35" height="34" rx="2.5" fill="#7cbb52"/><g stroke="#fff" fill="none" stroke-width="1.3"><rect x="10" y="8" width="17" height="11"/><rect x="7.5" y="11" width="17" height="11" fill="#7cbb52"/><circle cx="16" cy="16.5" r="3"/><ellipse cx="12" cy="24" rx="4.5" ry="1.6"/><ellipse cx="12" cy="27" rx="4.5" ry="1.6"/><ellipse cx="22.5" cy="23" rx="4" ry="1.5"/><ellipse cx="22.5" cy="26" rx="4" ry="1.5"/></g></svg>
<svg class="a" style="left:13px;top:184px" width="20" height="19" viewBox="0 0 20 19"><g fill="none" stroke="#555" stroke-width="1.1"><path d="M1 2.5h13M1 2.5v13h9"/><path d="M3 13l5-5 3 3 5.5-6"/><circle cx="17.5" cy="3" r="1.6"/><circle cx="14" cy="15" r="3.5"/><path d="M12.5 13.5l3 3M15.5 13.5l-3 3"/></g><g fill="#777"><rect x="3" y="11" width="1.3" height="4"/><rect x="5" y="10" width="1.3" height="5"/><rect x="7" y="11" width="1.3" height="4"/></g></svg>
<svg class="a" style="left:15px;top:224px" width="15" height="20" viewBox="0 0 15 20"><g fill="none" stroke="#666" stroke-width="1.1"><path d="M0.8 0.8h9l4.4 4.4v13.8H0.8z M9.8 0.8v4.4h4.4"/><path d="M3.5 2.5v3M6 2.5v3"/><path d="M2.5 16l4-4M3 12.5l3.5 3.5"/><circle cx="10.5" cy="12.5" r="1.3"/></g></svg>
<svg class="a" style="left:9px;top:265px" width="27" height="19" viewBox="0 0 27 19"><g fill="none" stroke="#444" stroke-width="1.2" stroke-linejoin="round"><path d="M1 6l4-5 5 3M26 6l-4-5-5 3"/><path d="M5 1L1 6l5 8 5 4 3-1 5-4 3-3"/><path d="M10 4l6-2 5 6M16 2l-6 6q2 2 4 0l3-2"/><path d="M8 12l2 3M10 11l3 4M12.5 10l3 3.5"/></g></svg>
<svg class="a" style="left:5px;top:297px" width="35" height="34" viewBox="0 0 35 34"><rect width="35" height="34" rx="2.5" fill="#7d35c8"/><g stroke="#fff" fill="none" stroke-width="1.2"><path d="M9 8h16v9M9 8v17h9"/><path d="M12 6v4M22 6v4"/><path d="M11 12h12M11 14.5h12"/><circle cx="23" cy="24" r="4.3" fill="#7d35c8"/><path d="M22.5 21.5v3h2.2"/><path d="M11 19h8M11 22q3-2 6 0"/></g></svg>
<svg class="a" style="left:5px;top:338px" width="35" height="34" viewBox="0 0 35 34"><rect width="35" height="34" rx="2.5" fill="#ee7a1e"/><g stroke="#fff" fill="none" stroke-width="1.3"><path d="M15 8h8l3.5 3.5V24H19"/><path d="M23 8v3.5h3.5"/><rect x="8.5" y="16.5" width="10.5" height="9" rx="1"/><path d="M8.5 19.5h10.5M12 16.5v-1.5h3.5v1.5"/></g></svg>
<svg class="a" style="left:5px;top:833px" width="35" height="34" viewBox="0 0 35 34"><rect width="35" height="34" rx="2.5" fill="#000"/><path d="M9 22.5C13 17 16 13 20 11.5H26V22.5H22.5V15.5H20C17 17 14.5 20 13.5 22.5Z" fill="#fff"/></svg>
<svg class="a" style="left:5px;top:873px" width="35" height="34" viewBox="0 0 35 34"><rect width="35" height="34" rx="2.5" fill="#5059c9"/><circle cx="22.5" cy="12.5" r="2.2" fill="#fff"/><path d="M19 15.5h6.5v5a3.2 3.2 0 0 1-6.5 0z" fill="#fff" opacity="0.85"/><circle cx="18" cy="12" r="2.6" fill="#fff"/><path d="M13.5 15.5h9v6a4.5 4.5 0 0 1-9 0z" fill="#fff"/><rect x="10" y="13.5" width="8" height="8" rx="0.8" fill="#4b53bc" stroke="#fff" stroke-width="0.8"/><path d="M11.8 15.5h4.4M14 15.5v4.5" stroke="#fff" stroke-width="1.2"/></svg>
<svg class="a" style="left:196px;top:929px" width="14" height="12" viewBox="0 0 14 12"><path d="M6.5 1L2 6l4.5 5M12 1L7.5 6l4.5 5" fill="none" stroke="#333" stroke-width="1.3"/></svg>
<!--/SIDE-->
<!--HDR-->
<svg class="a" style="left:1820px;top:15px" width="16" height="19" viewBox="0 0 16 19"><rect x="5" y="2" width="6" height="11" rx="1" fill="none" stroke="#fff" stroke-width="1.3"/><path d="M2.5 9.5v1.5a5.5 4.5 0 0 0 11 0V9.5M8 15.5v1.8M5 17.5h6" fill="none" stroke="#fff" stroke-width="1.3"/></svg>
<svg class="a" style="left:1850px;top:9px" width="33" height="33" viewBox="0 0 33 33">
<defs><radialGradient id="av" cx="50%" cy="55%" r="55%"><stop offset="0" stop-color="#b9bcbf"/><stop offset="1" stop-color="#8d9296"/></radialGradient>
<clipPath id="avc"><circle cx="16.5" cy="16.5" r="15.8"/></clipPath></defs>
<circle cx="16.5" cy="16.5" r="15.8" fill="url(#av)"/>
<g clip-path="url(#avc)">
<path d="M6 33c1-6 5-8 10.5-8s9.5 2 10.5 8z" fill="#6b5242"/>
<ellipse cx="16.5" cy="17" rx="7.6" ry="9.5" fill="#b98566"/>
<ellipse cx="16" cy="19" rx="5.5" ry="6" fill="#c99578"/>
<path d="M8.5 14c-.5-6 3.5-9.5 8.5-9.5s8.5 3.5 7.8 9.5c-1-3-3-4.5-7.8-4.5S9.5 11 8.5 14z" fill="#2b2622"/>
<path d="M12 15.5h3M18.5 15.5h3" stroke="#4a3528" stroke-width="1"/>
<path d="M13.5 22.5q3 1.5 6 0" stroke="#7a4a3a" stroke-width="0.9" fill="none"/>
</g></svg>
<svg class="a" style="left:1888px;top:20px" width="12" height="8" viewBox="0 0 12 8"><path d="M1 1.5l5 5 5-5" fill="none" stroke="#fff" stroke-width="1.3"/></svg>

<!--/HDR-->
</body></html>
